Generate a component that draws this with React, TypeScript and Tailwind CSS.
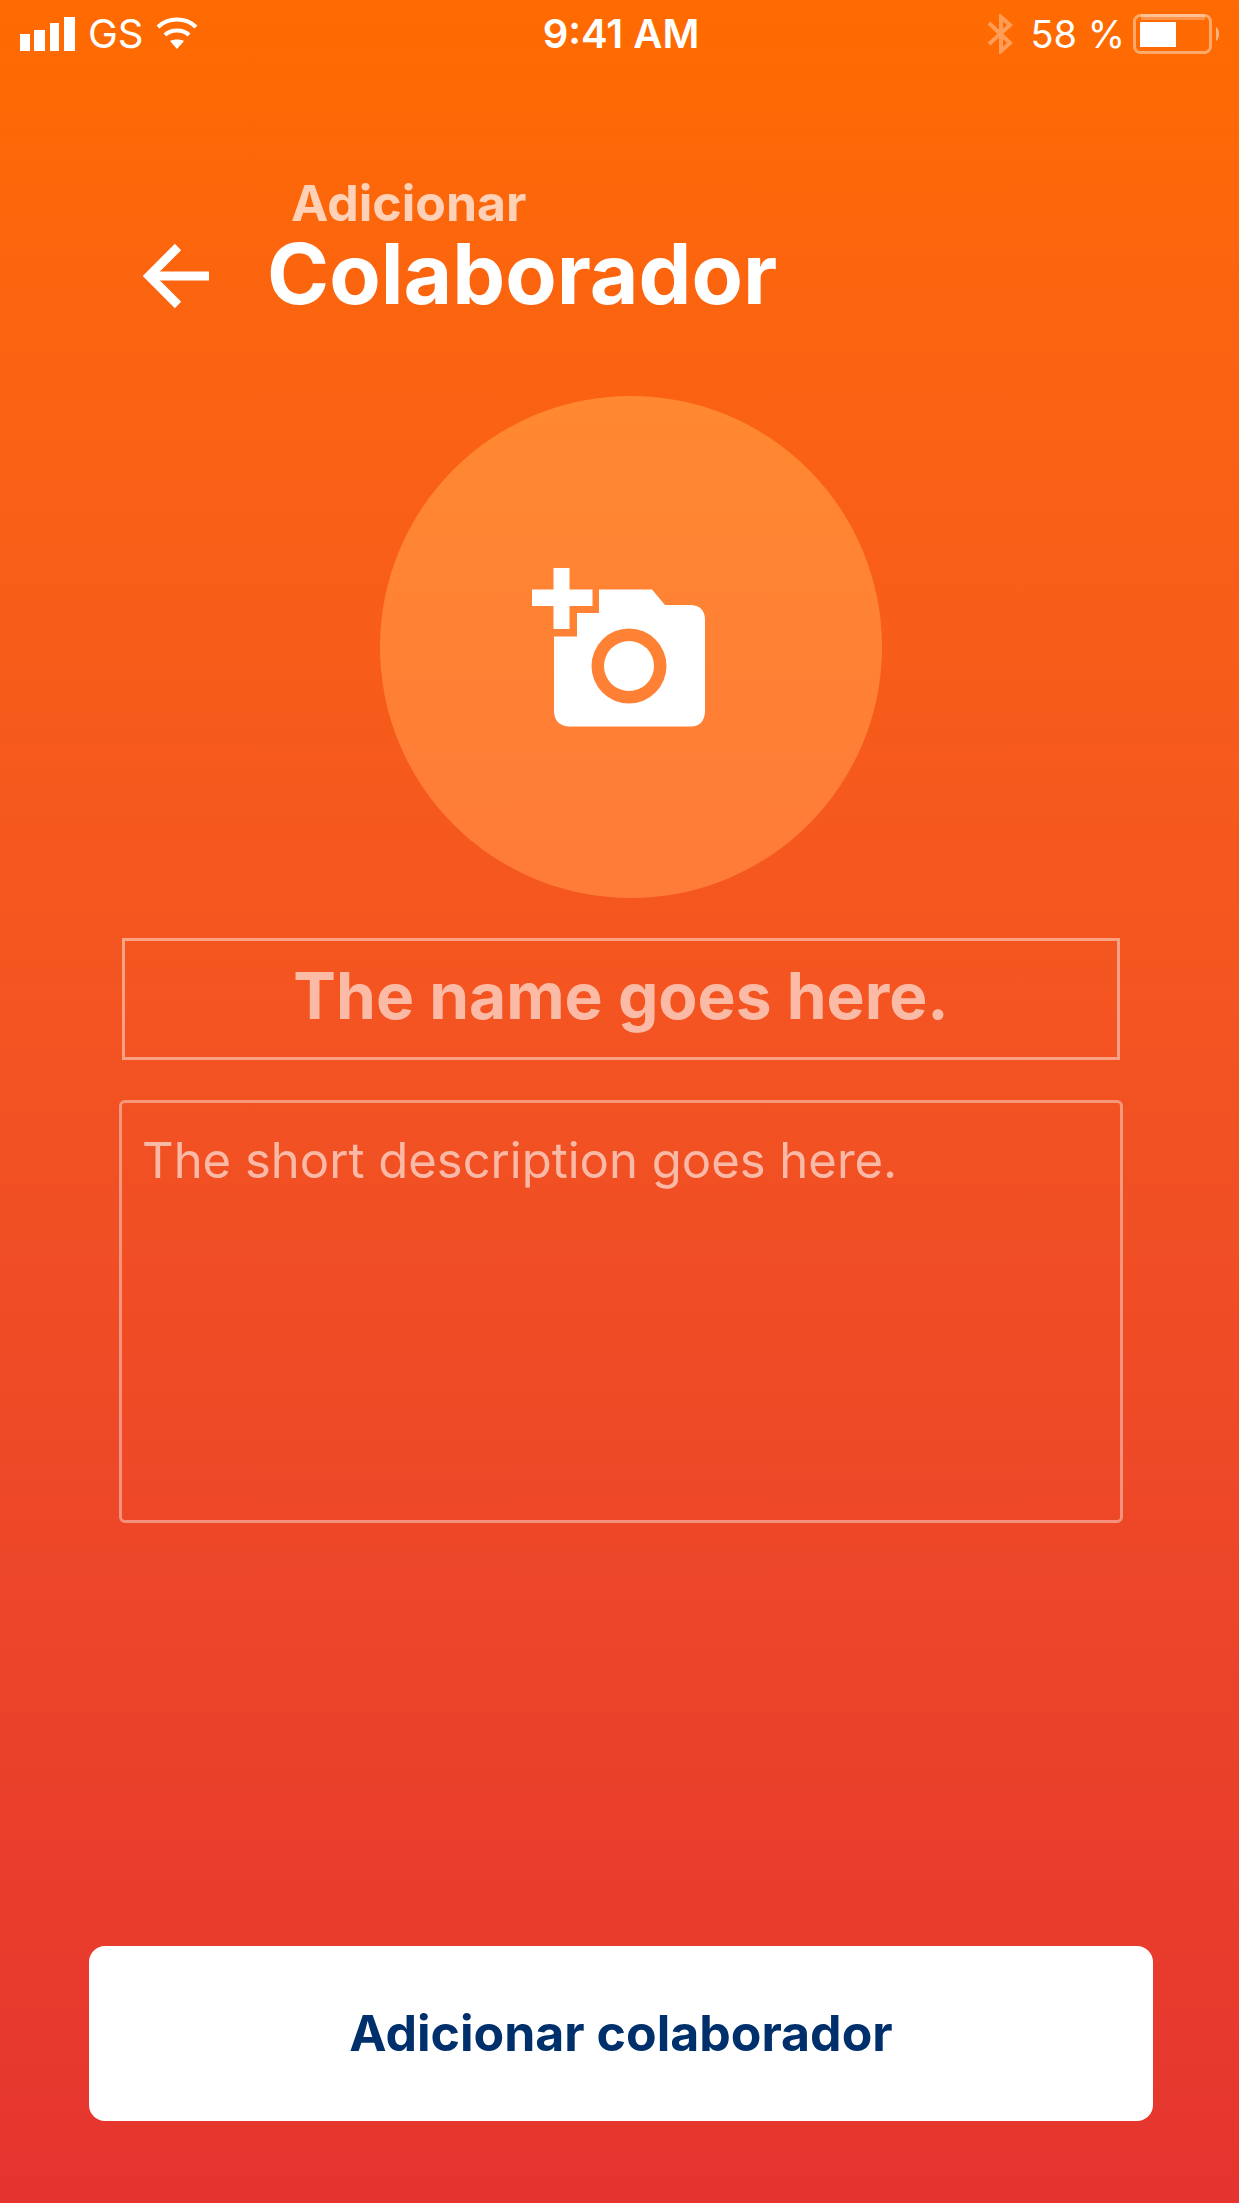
import React from "react";

function SignalIcon() {
  return (
    <svg width="56" height="34" viewBox="0 0 56 34" fill="#fff" aria-hidden="true">
      <rect x="0" y="17" width="10" height="17" />
      <rect x="14" y="13" width="11" height="21" />
      <rect x="30" y="6" width="9" height="28" />
      <rect x="44" y="0" width="11" height="34" />
    </svg>
  );
}

function WifiIcon() {
  return (
    <svg width="42" height="34" viewBox="0 0 42 34" fill="none" stroke="#fff" strokeWidth="4" aria-hidden="true">
      <path d="M2 10 C12 0 30 0 40 10" />
      <path d="M9 18 C15 12 27 12 33 18" />
      <path d="M14 24 C18 22 24 22 28 24 L21 32 Z" fill="#fff" stroke="none" />
    </svg>
  );
}

function BluetoothIcon() {
  return (
    <svg width="28" height="40" viewBox="0 0 28 40" fill="none" stroke="#fff" strokeOpacity="0.34" strokeWidth="4" aria-hidden="true">
      <path d="M3 9 L24 29 L15 37 V3 L24 11 L3 30" />
    </svg>
  );
}

function BatteryIcon() {
  return (
    <svg width="89" height="40" viewBox="0 0 89 40" fill="none" aria-hidden="true">
      <path d="M8 3 H72" stroke="#fff" strokeOpacity="0.28" strokeWidth="6" />
      <rect x="1.5" y="1.5" width="76" height="37" rx="6" stroke="#fff" strokeOpacity="0.42" strokeWidth="3" />
      <rect x="7" y="8" width="36" height="25" fill="#fff" />
      <path d="M83 13 C87 15 87 25 83 27 Z" fill="#fff" fillOpacity="0.5" />
    </svg>
  );
}

function BackIcon() {
  return (
    <svg width="68" height="66" viewBox="0 0 68 66" fill="none" stroke="#fff" strokeWidth="9" aria-hidden="true">
      <path d="M66 33 H7" />
      <path d="M35 4 L6 33 L35 62" />
    </svg>
  );
}

function AddPhotoIcon() {
  return (
    <svg width="174" height="159" viewBox="0 0 174 159" fill="#fff" aria-hidden="true">
      <path d="M21.5 0 H37.5 V21.5 H60.5 V38 H37.5 V61 H21.5 V38 H0 V21.5 H21.5 Z" />
      <path
        fillRule="evenodd"
        d="M67 21.5 H120 L133 37 H159 Q173 38 173 52 V144 Q172 158 159 158.500 H36 Q23 157 22 144 V68.500 H45 V45 H67 Z M97 60.500 a37.500 37.500 0 1 0 0 75 a37.500 37.500 0 1 0 0 -75 Z"
      />
      <circle cx="97" cy="98" r="25" />
    </svg>
  );
}

export default function App() {
  return (
    <div className="flex min-h-screen flex-col bg-white pr-[3px] pb-[5px] font-['Inter',sans-serif]">
      <div className="flex grow flex-col bg-linear-to-b from-[#ff6b00] to-[#e5342f] text-white">
        <header className="grid h-[68px] grid-cols-[1fr_auto_1fr] items-center pr-[17px] pl-5 text-[40px] leading-[68px]">
          <div className="flex items-center gap-3">
            <SignalIcon />
            <span>GS</span>
            <WifiIcon />
          </div>
          <span className="font-semibold">9:41 AM</span>
          <div className="flex items-center justify-end gap-2">
            <span className="mr-2">
              <BluetoothIcon />
            </span>
            <span className="text-[38px] whitespace-nowrap">58 %</span>
            <BatteryIcon />
          </div>
        </header>

        <main className="flex grow flex-col pt-[107px]">
          <div className="flex items-end gap-14 px-[143px]">
            <button type="button" aria-label="Voltar" className="mb-2">
              <BackIcon />
            </button>
            <h1 className="flex flex-col font-bold">
              <span className="pl-6 text-[50px] leading-[56px] text-white/70">Adicionar</span>
              <span className="text-[84px] leading-[86px]">Colaborador</span>
            </h1>
          </div>

          <button
            type="button"
            aria-label="Adicionar foto"
            className="mt-[79px] ml-[22px] flex size-[502px] items-center justify-center self-center rounded-full bg-linear-to-b from-[#ff8830] to-[#ff7b38] pr-6"
          >
            <AddPhotoIcon />
          </button>

          <form className="flex grow flex-col">
            <input
              type="text"
              aria-label="Nome"
              placeholder="The name goes here."
              className="mt-10 mr-[119px] ml-[122px] h-[122px] border-3 border-white/45 bg-transparent pb-2 text-center text-[64px] font-bold outline-none placeholder:text-white/60"
            />
            <textarea
              aria-label="Descrição"
              placeholder="The short description goes here."
              className="mt-10 mr-[116px] ml-[119px] h-[423px] resize-none rounded-[6px] border-3 border-white/40 bg-transparent px-5 py-7 text-[49px] leading-[60px] outline-none placeholder:text-white/60"
            />
            <button
              type="submit"
              className="mt-auto mr-[86px] mb-[82px] ml-[89px] h-[175px] rounded-[16px] bg-white text-[50px] font-bold text-[#00306b]"
            >
              Adicionar colaborador
            </button>
          </form>
        </main>
      </div>
    </div>
  );
}
